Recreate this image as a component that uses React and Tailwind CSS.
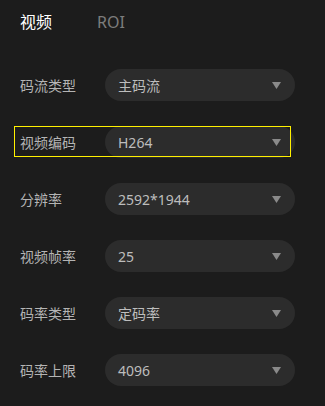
import React from "react";

const rows = [
  { label: "码流类型", value: "主码流" },
  { label: "视频编码", value: "H264", focus: true },
  { label: "分辨率", value: "2592*1944" },
  { label: "视频帧率", value: "25" },
  { label: "码率类型", value: "定码率" },
  { label: "码率上限", value: "4096" },
];

function Row({ label, value, focus }) {
  return (
    <div className="relative flex items-center h-[32px]">
      <div className="w-[85px] text-[14px] text-[#b4b4b4]">{label}</div>
      <div className="flex items-center justify-between w-[190px] h-[32px] rounded-full bg-[#2c2c2c] pl-[13px] pr-[14px]">
        <span className="text-[14px] text-[#bdbdbd]">{value}</span>
        <svg width="9" height="7" viewBox="0 0 9 7" className="block">
          <polygon points="0,0 9,0 4.5,7" fill="#8a8a8a" />
        </svg>
      </div>
      {focus && (
        <div className="absolute left-[-6px] top-0 w-[277px] h-[31px] border border-[#fff000] pointer-events-none" />
      )}
    </div>
  );
}

export default function App() {
  return (
    <div
      className="w-[325px] h-[406px] bg-[#1c1c1c] pl-[20px] pt-[11px] overflow-hidden"
      style={{ fontFamily: '"Noto Sans", "Noto Sans CJK SC", sans-serif' }}
    >
      <div className="flex items-center h-[22px] text-[16px] leading-[22px]">
        <span className="text-white">视频</span>
        <span className="ml-[45px] text-[#7c7c7c]">ROI</span>
      </div>
      <div className="mt-[36px] flex flex-col gap-[25px]">
        {rows.map((r) => (
          <Row key={r.label} {...r} />
        ))}
      </div>
    </div>
  );
}
